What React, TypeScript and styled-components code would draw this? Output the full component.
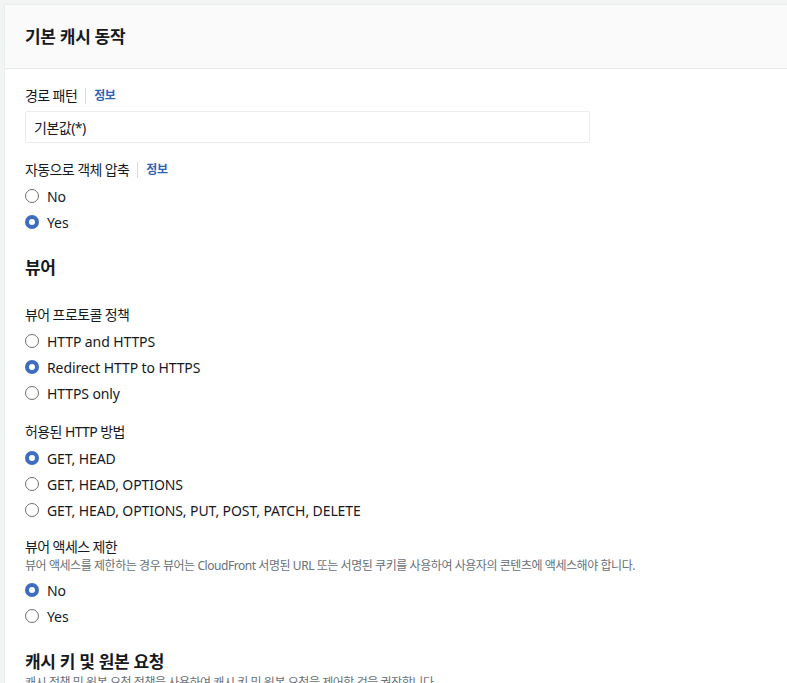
import React from "react";
import styled, { createGlobalStyle } from "styled-components";

const Global = createGlobalStyle`
  html, body { margin: 0; padding: 0; background: #f2f3f3; }
  body { font-family: "Noto Sans", "Noto Sans CJK KR", sans-serif; color: #16191f; }
  * { box-sizing: border-box; }
`;

const Page = styled.div`
  padding: 4px 0 0 4px;
  min-height: 683px;
  overflow: hidden;
`;

const Card = styled.section`
  background: #fff;
  border: 1px solid #eaeded;
  border-right: none;
  min-height: 700px;
`;

const Header = styled.header`
  height: 64px;
  background: #fafafa;
  border-bottom: 1px solid #eaeded;
  display: flex;
  align-items: center;
  padding: 0 20px;
`;

const Title = styled.h2`
  margin: 0;
  font-size: 17px;
  font-weight: 700;
  line-height: 24px;
  letter-spacing: -0.3px;
`;

const Body = styled.div`
  padding: 17px 20px 0 20px;
  display: flex;
  flex-direction: column;
`;

const Field = styled.div<{ $mt?: number }>`
  margin-top: ${(p) => p.$mt ?? 0}px;
  display: flex;
  flex-direction: column;
`;

const LabelRow = styled.div`
  display: flex;
  align-items: center;
  height: 20px;
  font-size: 14px;
  line-height: 20px;
  letter-spacing: -0.6px;
`;

const InfoLink = styled.a`
  margin-left: 8px;
  padding-left: 8px;
  border-left: 1px solid #d5dbdb;
  font-size: 12px;
  font-weight: 700;
  color: #2f64b8;
  line-height: 16px;
  letter-spacing: -0.4px;
  text-decoration: none;
`;

const Description = styled.div`
  font-size: 12px;
  line-height: 16px;
  color: #687078;
  margin-top: 1px;
  letter-spacing: -0.44px;
`;

const Input = styled.div`
  margin-top: 5px;
  width: 565px;
  height: 32px;
  border: 1px solid #eaeded;
  border-radius: 2px;
  display: flex;
  align-items: center;
  padding: 0 8px;
  font-size: 14px;
  letter-spacing: -0.5px;
`;

const RadioGroup = styled.div`
  margin-top: 3px;
  display: flex;
  flex-direction: column;
`;

const RadioRow = styled.label`
  height: 26px;
  display: flex;
  align-items: center;
  gap: 8px;
  font-size: 14px;
  letter-spacing: -0.1px;
`;

const Circle = styled.span<{ $on: boolean }>`
  width: 14px;
  height: 14px;
  border-radius: 50%;
  background: #fff;
  border: ${(p) => (p.$on ? "4px solid #3d6dbf" : "1.5px solid #6b7178")};
  flex: none;
`;

const SectionHeading = styled.h3<{ $mt: number }>`
  margin: ${(p) => p.$mt}px 0 0 0;
  font-size: 17px;
  font-weight: 700;
  line-height: 24px;
  letter-spacing: -0.3px;
`;

const Radios = ({ items, sel }: { items: string[]; sel: number }) => (
  <RadioGroup>
    {items.map((t, i) => (
      <RadioRow key={t}>
        <Circle $on={i === sel} />
        {t}
      </RadioRow>
    ))}
  </RadioGroup>
);

export default function App() {
  return (
    <>
      <Global />
      <Page>
        <Card>
          <Header>
            <Title>기본 캐시 동작</Title>
          </Header>
          <Body>
            <Field>
              <LabelRow>
                경로 패턴<InfoLink>정보</InfoLink>
              </LabelRow>
              <Input>기본값(*)</Input>
            </Field>
            <Field $mt={17}>
              <LabelRow>
                자동으로 객체 압축<InfoLink>정보</InfoLink>
              </LabelRow>
              <Radios items={["No", "Yes"]} sel={1} />
            </Field>
            <SectionHeading $mt={21}>뷰어</SectionHeading>
            <Field $mt={25}>
              <LabelRow>뷰어 프로토콜 정책</LabelRow>
              <Radios items={["HTTP and HTTPS", "Redirect HTTP to HTTPS", "HTTPS only"]} sel={1} />
            </Field>
            <Field $mt={16}>
              <LabelRow>허용된 HTTP 방법</LabelRow>
              <Radios
                items={["GET, HEAD", "GET, HEAD, OPTIONS", "GET, HEAD, OPTIONS, PUT, POST, PATCH, DELETE"]}
                sel={0}
              />
            </Field>
            <Field $mt={14}>
              <LabelRow>뷰어 액세스 제한</LabelRow>
              <Description>
                뷰어 액세스를 제한하는 경우 뷰어는 CloudFront 서명된 URL 또는 서명된 쿠키를 사용하여 사용자의 콘텐츠에 액세스해야 합니다.
              </Description>
              <Radios items={["No", "Yes"]} sel={0} />
            </Field>
            <SectionHeading $mt={21}>캐시 키 및 원본 요청</SectionHeading>
            <Description>
              캐시 정책 및 원본 요청 정책을 사용하여 캐시 키 및 원본 요청을 제어할 것을 권장합니다.
            </Description>
          </Body>
        </Card>
      </Page>
    </>
  );
}
